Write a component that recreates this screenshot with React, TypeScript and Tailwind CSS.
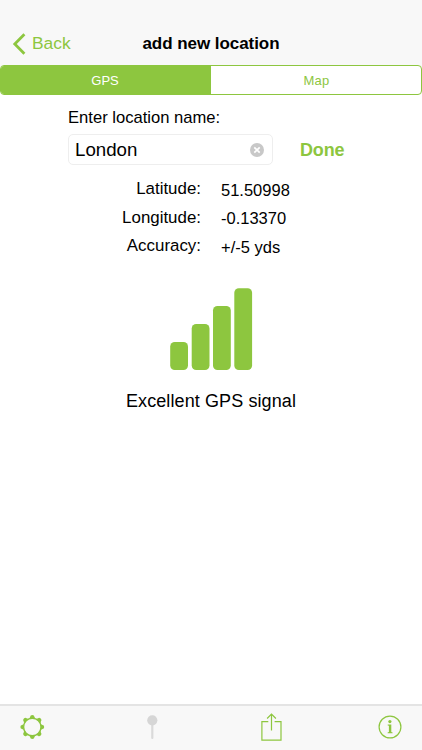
import React from "react";

const readings = [
  { label: "Latitude:", value: "51.50998" },
  { label: "Longitude:", value: "-0.13370" },
  { label: "Accuracy:", value: "+/-5 yds" },
];

const teeth = [0, 45, 90, 135, 180, 225, 270, 315];

function GearIcon() {
  return (
    <svg width="26" height="26" viewBox="-13 -13 26 26" fill="none">
      <circle cx="0.3" cy="0" r="8.7" stroke="#8dc63f" strokeWidth="1.4" />
      {teeth.map((angle) => (
        <path key={angle} d="M-3-8.4L-2.1-10.2Q-2.1-11.9 0-11.9T2.1-10.2L3-8.4Q0-9-3-8.4Z" fill="#8dc63f" transform={`translate(0.3 0) rotate(${angle})`} />
      ))}
    </svg>
  );
}

function PinIcon() {
  return (
    <svg width="12" height="26" viewBox="0 0 12 26">
      <path d="M6.3 9V24" stroke="#dadada" strokeWidth="2.2" strokeLinecap="round" />
      <circle cx="6.3" cy="6.3" r="5.1" fill="#d6d6d6" />
    </svg>
  );
}

function ShareIcon() {
  return (
    <svg width="22" height="28" viewBox="0 0 22 28" fill="none" stroke="#8dc63f" strokeWidth="1.2">
      <path d="M8.3 8.7H1.9V27.2H21V8.7H14.6" />
      <path d="M11.5 17.5V1.2M7.1 5.5L11.5 1.1L15.9 5.5" />
    </svg>
  );
}

function InfoIcon() {
  return (
    <svg width="24" height="24" viewBox="0 0 24 24" fill="none">
      <circle cx="12" cy="12" r="10.9" stroke="#8dc63f" strokeWidth="1.2" />
      <circle cx="11.9" cy="6.6" r="1.6" fill="#8dc63f" />
      <path d="M9.7 9.6H13.3V17L14.6 17.4V18.2H9.6V17.4L10.9 17V10.8L9.7 10.5Z" fill="#8dc63f" />
    </svg>
  );
}

export default function App() {
  return (
    <div className="flex h-[750px] w-[422px] flex-col bg-white font-['Liberation_Sans',Arial,sans-serif] text-black">
      <div className="flex h-[65px] shrink-0 flex-col justify-end bg-[#f8f8f8]">
        <header className="grid h-[43px] grid-cols-[1fr_auto_1fr] items-center">
          <button className="flex items-center gap-[6px] pl-[12px] text-[17.4px] leading-[20px] text-[#8dc63f]">
            <svg width="14" height="22" viewBox="0 0 14 22" fill="none" stroke="#8dc63f" strokeWidth="2.8">
              <path d="M12.4 1.3L2.8 11L12.4 20.7" />
            </svg>
            <span className="pb-[2px]">Back</span>
          </button>
          <h1 className="text-[17px] leading-[20px] font-bold tracking-[-0.05px]">add new location</h1>
          <span />
        </header>
      </div>

      <div className="bg-gradient-to-b from-[#f8f8f8] from-10% to-white to-10%">
        <div className="grid h-[30px] grid-cols-2 overflow-hidden rounded-[4px] border border-[#8dc63f] bg-white text-[13px]">
          <button className="bg-[#8dc63f] pt-[1px] pr-[2px] text-white">GPS</button>
          <button className="pt-[1px] pl-[1px] tracking-[0.3px] text-[#8dc63f]">Map</button>
        </div>
      </div>

      <main className="flex flex-1 flex-col">
        <label className="mt-[13px] ml-[68px] text-[16.6px] leading-[20px]">Enter location name:</label>
        <div className="mt-[6px] ml-[68px] flex items-center">
          <div className="flex h-[31px] w-[205px] items-center justify-between rounded-[5px] border border-[#eeeeee] pr-[8px] pl-[6px]">
            <span className="text-[18.7px] leading-[20px]">London</span>
            <svg width="14" height="14" viewBox="0 0 14 14">
              <circle cx="7" cy="7" r="7" fill="#c8c8c8" />
              <path d="M4.3 4.3L9.7 9.7M9.7 4.3L4.3 9.7" stroke="white" strokeWidth="1.7" />
            </svg>
          </div>
          <button className="ml-[27px] text-[18px] leading-[20px] font-bold tracking-[-0.15px] text-[#8dc63f]">Done</button>
        </div>

        <dl className="mt-[10px]">
          {readings.map((r) => (
            <div key={r.label} className="flex h-[28.5px] items-center leading-[24px]">
              <dt className="w-[201px] text-right text-[16.9px]">{r.label}</dt>
              <dd className="ml-[20px] pt-[1px] text-[16.5px]">{r.value}</dd>
            </div>
          ))}
        </dl>

        <svg className="mt-[27px] ml-[170px]" width="83" height="83" viewBox="0 0 83 83" fill="#8dc63f">
          <rect x="0.2" y="54" width="17.8" height="28" rx="4.5" />
          <rect x="21.7" y="36" width="17.8" height="46" rx="4.5" />
          <rect x="43" y="18" width="17.8" height="64" rx="4.5" />
          <rect x="64.3" y="0.2" width="17.8" height="81.8" rx="4.5" />
        </svg>
        <p className="mt-[20px] text-center text-[18px] leading-[20px] tracking-[0.1px]">Excellent GPS signal</p>
      </main>

      <footer className="flex h-[46px] shrink-0 items-center border-t-2 border-[#e4e4e4] bg-[#f8f8f8] pb-[2px]">
        <button className="ml-[19px]"><GearIcon /></button>
        <button className="ml-[101px]"><PinIcon /></button>
        <button className="ml-[102px]"><ShareIcon /></button>
        <button className="ml-[96px]"><InfoIcon /></button>
      </footer>
    </div>
  );
}
